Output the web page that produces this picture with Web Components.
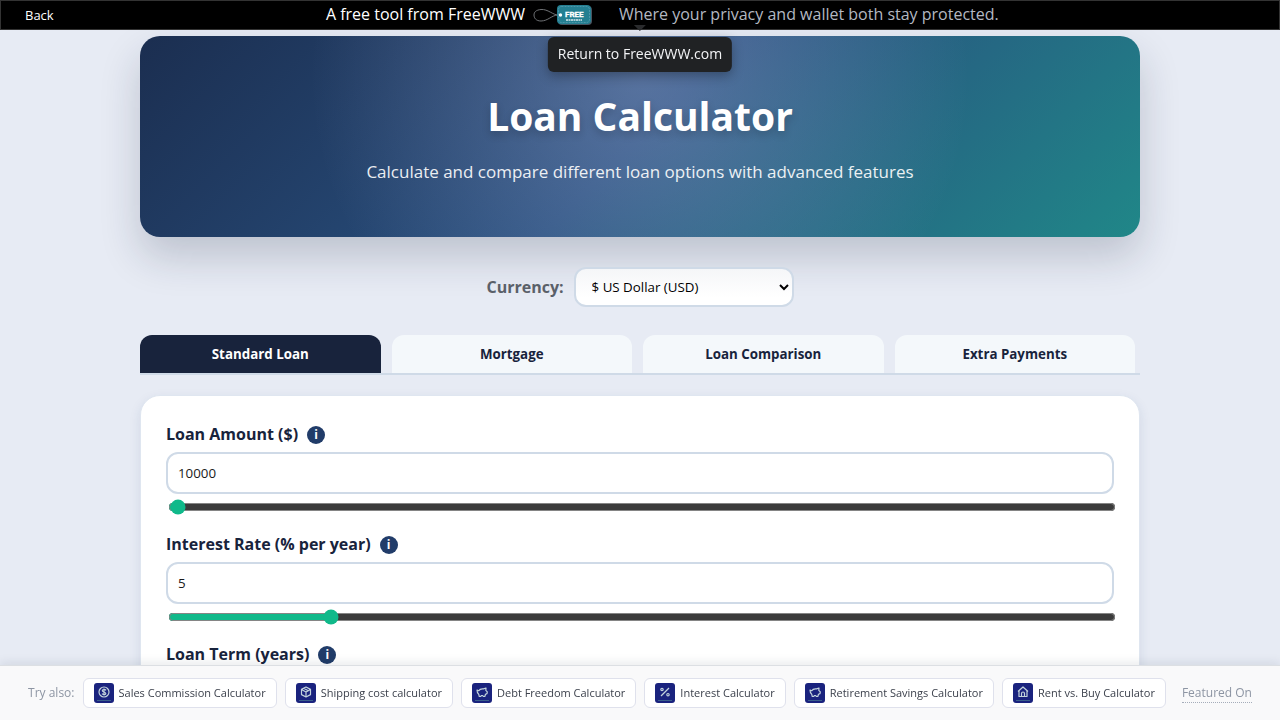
<!DOCTYPE html>
<html lang="en">
<head>
<meta charset="UTF-8">
<meta name="viewport" content="width=device-width, initial-scale=1">
<title>Loan Calculator</title>
<style>
  :root {
    --navy: #18233c;
    --blue: #213c69;
    --line: #cfdae7;
    --accent: #10b98a;
    --page: #e7ebf4;
  }
  body {
    margin: 0;
    padding: 36px 20px 72px;
    background: var(--page);
    color: var(--navy);
    font-family: "Open Sans", "Noto Sans", sans-serif;
    font-size: 16px;
  }
  main {
    max-width: 1000px;
    margin: 0 auto;
  }
</style>
</head>
<body>
<top-bar></top-bar>
<main>
  <hero-banner>
    <span slot="title">Loan Calculator</span>
    Calculate and compare different loan options with advanced features
  </hero-banner>
  <currency-picker></currency-picker>
  <tab-strip tabs="Standard Loan,Mortgage,Loan Comparison,Extra Payments"></tab-strip>
  <calc-card>
    <calc-field label="Loan Amount ($)" value="10000" min="0" max="5000000"></calc-field>
    <calc-field label="Interest Rate (% per year)" value="5" min="0" max="30" step="0.1"></calc-field>
    <calc-field label="Loan Term (years)" value="5" min="1" max="40"></calc-field>
  </calc-card>
</main>
<try-also>
  <tool-chip icon="coin">Sales Commission Calculator</tool-chip>
  <tool-chip icon="box">Shipping cost calculator</tool-chip>
  <tool-chip icon="piggy">Debt Freedom Calculator</tool-chip>
  <tool-chip icon="percent">Interest Calculator</tool-chip>
  <tool-chip icon="piggy">Retirement Savings Calculator</tool-chip>
  <tool-chip icon="house">Rent vs. Buy Calculator</tool-chip>
</try-also>

<script>
class TopBar extends HTMLElement {
  constructor() {
    super();
    this.attachShadow({ mode: 'open' });
  }

  connectedCallback() {
    this.shadowRoot.innerHTML = `
      <style>
        :host {
          position: fixed;
          top: 0;
          left: 0;
          right: 0;
          z-index: 10;
          display: flex;
          align-items: flex-start;
          box-sizing: border-box;
          height: 30px;
          padding: 0 8px 0 24px;
          border: 1px solid #333;
          background: #000;
        }
        a { color: #fff; text-decoration: none; }
        .back { font-size: 13px; line-height: 28px; }
        .brand {
          flex: 1;
          display: flex;
          justify-content: center;
          line-height: 26px;
        }
        svg { display: block; margin: 3px 27px 0 8px; }
        .note { color: #b3b8c2; }
        .tip {
          position: absolute;
          top: 36px;
          left: 50%;
          transform: translateX(-50%);
          padding: 0 10px 2px;
          border-radius: 6px;
          background: #202224;
          color: #f3f4f6;
          font-size: 14px;
          line-height: 33px;
          white-space: nowrap;
          box-shadow: 0 4px 12px rgba(0, 0, 0, .3);
        }
        .tip::before {
          content: "";
          position: absolute;
          top: -12px;
          left: 50%;
          margin-left: -6px;
          border: 6px solid transparent;
          border-top-color: #2a2b2d;
          border-bottom: 0;
        }
      </style>
      <a class="back" href="#">Back</a>
      <a class="brand" href="#">
        <span>A free tool from FreeWWW</span>
        <svg width="59" height="22" viewBox="0 0 59 22" aria-hidden="true">
          <path d="M25 11C20 11 15 5 8 5.500C3 6 1 8 1 11s2 6 7 6C15 17 19 11 25 11" fill="none" stroke="#6f7275" stroke-width="1"/>
          <rect x="25" y="2" width="34" height="19" rx="4" fill="#4a5460"/>
          <rect x="24" y="1" width="34" height="19" rx="4" fill="#247f91"/>
          <rect x="25.500" y="2.500" width="31" height="16" rx="3" fill="none" stroke="#68a5bb" stroke-width=".6" stroke-dasharray="2 1"/>
          <circle cx="27.500" cy="11" r="1.700" fill="#fff"/>
          <text x="32" y="13" font-family="Roboto, sans-serif" font-size="8" font-weight="700" fill="#fff" stroke="#fff" stroke-width=".3">FREE</text>
          <path d="M33 16h16" stroke="#d6e9ee" stroke-width="1.500" stroke-dasharray="2 .5"/>
        </svg>
        <span class="note">Where your privacy and wallet both stay protected.</span>
      </a>
      <div class="tip" role="tooltip">Return to FreeWWW.com</div>
    `;
  }
}

class HeroBanner extends HTMLElement {
  constructor() {
    super();
    this.attachShadow({ mode: 'open' });
  }

  connectedCallback() {
    this.shadowRoot.innerHTML = `
      <style>
        :host {
          display: block;
          padding: 50px 20px;
          border-radius: 20px;
          background:
            radial-gradient(circle at 50% 20%, rgba(215, 215, 255, .27), transparent 330px),
            linear-gradient(135deg, #1b2e50, #29507f 50%, #208788);
          box-shadow: 0 20px 40px rgba(24, 35, 60, .2);
          color: #fff;
          text-align: center;
        }
        h1 {
          margin: 0 0 10px;
          font-size: 39px;
          line-height: 60px;
          text-shadow: 0 4px 8px rgba(0, 0, 0, .2);
        }
        p {
          margin: 0;
          font-size: 17px;
          line-height: 31px;
          opacity: .9;
        }
      </style>
      <h1><slot name="title"></slot></h1>
      <p><slot></slot></p>
    `;
  }
}

class CurrencyPicker extends HTMLElement {
  constructor() {
    super();
    this.attachShadow({ mode: 'open' });
  }

  connectedCallback() {
    this.shadowRoot.innerHTML = `
      <style>
        :host {
          display: flex;
          align-items: center;
          justify-content: center;
          gap: 10px;
          margin: 30px 0 28px;
        }
        label { color: #5a6069; font-weight: 700; }
        select {
          box-sizing: border-box;
          width: 220px;
          height: 40px;
          padding: 0 10px 0 12px;
          border: 2px solid var(--line);
          border-radius: 12px;
          background: linear-gradient(#f5f6f8, #fff 80%);
          color: #000;
          font-family: inherit;
        }
      </style>
      <label for="currency">Currency:</label>
      <select id="currency">
        <option>$ US Dollar (USD)</option>
        <option>€ Euro (EUR)</option>
        <option>£ British Pound (GBP)</option>
      </select>
    `;
  }
}

class TabStrip extends HTMLElement {
  constructor() {
    super();
    this.attachShadow({ mode: 'open' });
  }

  connectedCallback() {
    const tabs = this.getAttribute('tabs').split(',');
    this.shadowRoot.innerHTML = `
      <style>
        :host {
          display: flex;
          gap: 11px;
          margin-bottom: 20px;
          padding-right: 5px;
          border-bottom: 2px solid var(--line);
        }
        button {
          flex: 1;
          padding: 10px 0;
          border: 0;
          border-radius: 12px 12px 0 0;
          background: #f4f8fb;
          color: var(--navy);
          font-family: inherit;
          font-weight: 700;
          line-height: 18px;
          cursor: pointer;
        }
        button[aria-selected="true"] { background: var(--navy); color: #fff; }
      </style>
      ${tabs.map((tab, i) => `<button role="tab" aria-selected="${i === 0}">${tab}</button>`).join('')}
    `;
    this.setAttribute('role', 'tablist');
    const buttons = this.shadowRoot.querySelectorAll('button');
    buttons.forEach(button => button.addEventListener('click', () => {
      buttons.forEach(b => b.setAttribute('aria-selected', b === button));
    }));
  }
}

class CalcCard extends HTMLElement {
  constructor() {
    super();
    this.attachShadow({ mode: 'open' });
  }

  connectedCallback() {
    this.shadowRoot.innerHTML = `
      <style>
        :host {
          display: flex;
          flex-direction: column;
          gap: 17px;
          padding: 26px 25px;
          border: 1px solid #dfe6f0;
          border-radius: 20px;
          background: #fff;
          box-shadow: 0 4px 12px rgba(33, 60, 105, .1);
        }
      </style>
      <slot></slot>
    `;
  }
}

class CalcField extends HTMLElement {
  constructor() {
    super();
    this.attachShadow({ mode: 'open' });
  }

  connectedCallback() {
    const label = this.getAttribute('label');
    const value = this.getAttribute('value');
    const min = this.getAttribute('min');
    const max = this.getAttribute('max');
    const step = this.getAttribute('step') || 1;

    this.shadowRoot.innerHTML = `
      <style>
        :host { display: flex; flex-direction: column; }
        .head {
          display: flex;
          align-items: center;
          gap: 9px;
          margin-bottom: 6px;
          line-height: 24px;
        }
        label { font-weight: 700; }
        .info {
          width: 18px;
          height: 18px;
          margin-top: 2px;
          border-radius: 50%;
          background: var(--blue);
          color: #fff;
          font-size: 12px;
          font-weight: 700;
          line-height: 18px;
          text-align: center;
        }
        .box {
          box-sizing: border-box;
          width: 100%;
          height: 42px;
          padding: 0 10px;
          border: 2px solid var(--line);
          border-radius: 12px;
          background: #fff;
          color: #1a1a1a;
          font-family: inherit;
        }
        input[type="range"] {
          width: 100%;
          height: 16px;
          margin: 5px 2px 0;
          accent-color: var(--accent);
        }
      </style>
      <div class="head">
        <label for="value">${label}</label>
        <span class="info">i</span>
      </div>
      <input class="box" id="value" type="text" inputmode="decimal" value="${value}">
      <input type="range" aria-label="${label}" min="${min}" max="${max}" step="${step}" value="${value}">
    `;

    const box = this.shadowRoot.querySelector('.box');
    const range = this.shadowRoot.querySelector('[type="range"]');
    range.addEventListener('input', () => { box.value = range.value; });
    box.addEventListener('input', () => { range.value = box.value; });
  }
}

// 20x20 glyphs, drawn in the middle of the chip's navy square
const chipIcons = {
  coin: '<circle cx="10" cy="9" r="5"/><path d="M12 7.300C11 6 8.300 6.300 8.300 7.700S11.800 9 11.800 10.400 9 12 8 10.700M10 5.500v7"/>',
  box: '<path d="M10 4l4.500 2.400v5.200L10 14l-4.500-2.400V6.400zM5.500 6.400L10 9l4.500-2.600M10 9v5M7.700 5.200l4.500 2.600"/>',
  piggy: '<path d="M5 7l1.800.8C7.600 6.300 9.500 5.600 11.500 5.900L14 5l-.2 2.300 1.500 1.500-.3 1.800-1.500.7-.7 2.200h-1.500l-.6-1H9.300l-.5 1H7.300l-.6-2.300C5.600 10.300 5 8.800 5 7z"/>',
  percent: '<path d="M14 5l-8 8"/><circle cx="7" cy="6.500" r="1.200"/><circle cx="13" cy="11.700" r="1.200"/>',
  house: '<path d="M5 8.500L10 4l5 4.500M6 8v5.500h8V8M8.500 13.500v-3a1.500 1.500 0 0 1 3 0v3"/>'
};

class ToolChip extends HTMLElement {
  constructor() {
    super();
    this.attachShadow({ mode: 'open' });
  }

  connectedCallback() {
    this.shadowRoot.innerHTML = `
      <style>
        :host { display: block; }
        a {
          display: flex;
          align-items: center;
          gap: 5px;
          padding: 4px 10px;
          border: 1px solid #dfe1ec;
          border-radius: 6px;
          background: #fff;
          color: #3c414c;
          font-size: 11px;
          line-height: 20px;
          text-decoration: none;
          white-space: nowrap;
        }
        svg { display: block; }
      </style>
      <a href="#">
        <svg width="20" height="20" viewBox="0 0 20 20" aria-hidden="true">
          <rect width="20" height="20" rx="3" fill="#1a237e"/>
          <g fill="none" stroke="#c3d3dc" stroke-width="1.200" stroke-linejoin="round">${chipIcons[this.getAttribute('icon')]}</g>
          <path d="M3 17.500h14" stroke="#44708f" stroke-width=".8"/>
        </svg>
        <slot></slot>
      </a>
    `;
  }
}

class TryAlso extends HTMLElement {
  constructor() {
    super();
    this.attachShadow({ mode: 'open' });
  }

  connectedCallback() {
    this.shadowRoot.innerHTML = `
      <style>
        :host {
          position: fixed;
          left: 0;
          right: 0;
          bottom: 0;
          z-index: 10;
          display: flex;
          align-items: center;
          justify-content: center;
          gap: 8px;
          padding: 12px 16px;
          border-top: 1px solid #dcdfe3;
          background: #f9f9fa;
          box-shadow: 0 -2px 10px rgba(24, 35, 60, .1);
          color: #8d95a3;
          font-size: 12px;
          line-height: 18px;
          white-space: nowrap;
        }
        a {
          margin-left: 8px;
          border-bottom: 1px dotted #a5adba;
          color: inherit;
          text-decoration: none;
        }
      </style>
      <span>Try also:</span>
      <slot></slot>
      <a href="#">Featured On</a>
    `;
  }
}

customElements.define('top-bar', TopBar);
customElements.define('hero-banner', HeroBanner);
customElements.define('currency-picker', CurrencyPicker);
customElements.define('tab-strip', TabStrip);
customElements.define('calc-card', CalcCard);
customElements.define('calc-field', CalcField);
customElements.define('tool-chip', ToolChip);
customElements.define('try-also', TryAlso);
</script>
</body>
</html>
